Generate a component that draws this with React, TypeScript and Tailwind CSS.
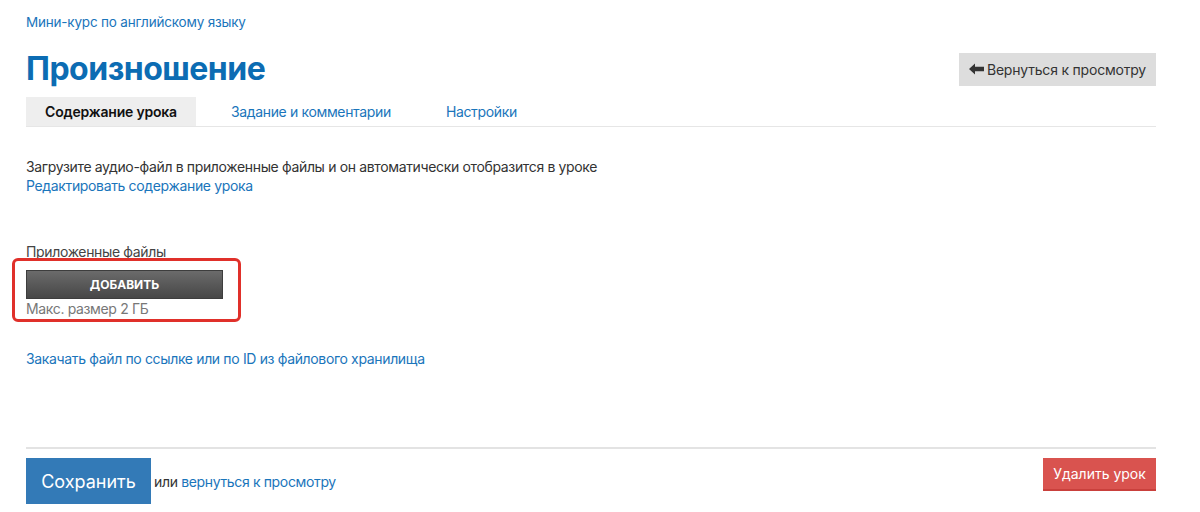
const link = "text-[#1a75bb]";

const Tabs = () => (
  <div className="flex border-b border-[#e6e6e6] h-[30px]">
    <div className="flex items-center justify-center w-[170px] bg-[#eeeeee] text-[14px] font-semibold text-[#111] tracking-[-0.2px]">
      Содержание урока
    </div>
    <div className={`flex items-center px-[35px] text-[14px] tracking-[-0.35px] ${link}`}>Задание и комментарии</div>
    <div className={`flex items-center px-[20px] text-[14px] tracking-[-0.35px] ${link}`}>Настройки</div>
  </div>
);

export default function App() {
  return (
    <div
      className="w-[1200px] h-[512px] bg-white overflow-hidden px-[26px] pr-[44px]"
      style={{ fontFamily: "Inter, 'Noto Sans', sans-serif" }}
    >
      <div className={`pt-[12px] text-[13.5px] leading-[20px] ${link} tracking-[-0.2px]`}>
        Мини-курс по английскому языку
      </div>

      <div className="mt-[20px] flex items-center justify-between h-[34px]">
        <h1 className="text-[32px] font-bold text-[#0c6cb3] tracking-[-0.5px] leading-[34px]">Произношение</h1>
        <button className="h-[33px] w-[197px] bg-[#dddddd] text-[14px] text-[#333] flex items-center justify-center gap-[3px] tracking-[-0.2px]">
          <svg width="15" height="12" viewBox="0 0 15 12" fill="#333">
            <path d="M0 6 L6 0.5 L6 3.8 L15 3.8 L15 8.2 L6 8.2 L6 11.5 Z" />
          </svg>
          Вернуться к просмотру
        </button>
      </div>

      <div className="mt-[11px]">
        <Tabs />
      </div>

      <div className="mt-[30px] text-[14px] leading-[19px] text-[#333] tracking-[-0.35px]">
        Загрузите аудио-файл в приложенные файлы и он автоматически отобразится в уроке
      </div>
      <div className={`text-[14px] leading-[19px] ${link} tracking-[-0.35px]`}>Редактировать содержание урока</div>

      <div className="mt-[47px] text-[14px] leading-[19px] text-[#444] tracking-[-0.35px]">Приложенные файлы</div>

      <div className="relative mt-[2px] h-[55px]">
        <div className="absolute left-[-14px] top-[-5px] w-[229px] h-[64px] border-[3px] border-[#e0302a] rounded-[6px]" />
        <button className="mt-[7px] w-[197px] h-[29px] bg-gradient-to-b from-[#6b6b6b] to-[#474747] border border-[#3d3d3d] text-white text-[12px] font-bold">
          ДОБАВИТЬ
        </button>
        <div className="text-[14px] leading-[19px] text-[#777] tracking-[-0.35px]">Макс. размер 2 ГБ</div>
      </div>

      <div className={`mt-[31px] text-[14px] leading-[19px] ${link} tracking-[-0.35px]`}>
        Закачать файл по ссылке или по ID из файлового хранилища
      </div>

      <div className="mt-[79px] border-t-[2px] border-[#e3e3e3]" />

      <div className="mt-[9px] flex items-start justify-between">
        <div className="flex items-center">
          <button className="w-[125px] h-[46px] bg-[#337ab7] text-white text-[18px]">Сохранить</button>
          <span className="ml-[3px] text-[14px] text-[#333] tracking-[-0.35px]">
            или <span className={link}>вернуться к просмотру</span>
          </span>
        </div>
        <button className="w-[113px] h-[33px] bg-[#d9534f] text-white text-[14px] border-b-2 border-[#c9403c]">
          Удалить урок
        </button>
      </div>
    </div>
  );
}
